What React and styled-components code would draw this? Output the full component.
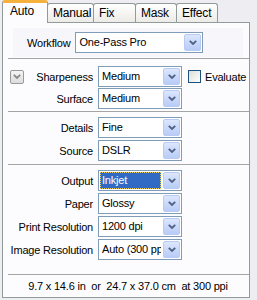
import React from 'react'
import styled, { createGlobalStyle } from 'styled-components'

const GlobalStyle = createGlobalStyle`
    body {
        margin: 0;
        background: #EEEDF2;
        font-family: "Liberation Sans", Arial, sans-serif;
        font-size: 11px;
        letter-spacing: -0.2px;
        color: #000;
    }
`

const Root = styled.div`
    width: 257px;
    height: 300px;
    padding: 0 7px 0 2px;
    box-sizing: border-box;
`

const TabBar = styled.div`
    display: flex;
    height: 23px;
    position: relative;
    z-index: 1;
`

const Tab = styled.div`
    box-sizing: border-box;
    width: ${p => p.$w}px;
    height: ${p => (p.$active ? 23 : 19)}px;
    margin-top: ${p => (p.$active ? 0 : 3)}px;
    margin-left: ${p => (p.$first ? 0 : -1)}px;
    border: 1px solid #919B9C;
    border-bottom: none;
    border-top: ${p => (p.$active ? '3px solid #F5B13C' : '1px solid #919B9C')};
    border-radius: 3px 3px 0 0;
    background: ${p => (p.$active ? '#FCFCFE' : 'linear-gradient(#FFFFFF, #ECEBE6)')};
    padding: ${p => (p.$active ? '2px 0 0 7px' : '3px 0 0 5px')};
    font-size: 12px;
    line-height: 13px;
`

const Panel = styled.div`
    box-sizing: border-box;
    margin-top: -1px;
    height: 276px;
    border: 1px solid #919B9C;
    background: #FCFCFE;
    display: flex;
    flex-direction: column;
`

const WorkflowGroup = styled.div`
    margin: 5px 6px 0 10px;
    height: 29px;
    background: #F7F7FB;
    display: flex;
    align-items: center;
    gap: 5px;
    padding-left: 14px;
`

const Separator = styled.div`
    height: 1px;
    margin-left: 5px;
    margin-top: ${p => p.$top || 0}px;
    background: #A5A5A5;
`

const Section = styled.div`
    display: grid;
    grid-template-columns: 85px 84px auto;
    column-gap: 5px;
    row-gap: ${p => p.$gap ?? 2}px;
    padding: ${p => p.$pad || '5px 0 3px 5px'};
`

const LabelCell = styled.div`
    display: flex;
    align-items: center;
    justify-content: ${p => (p.$withToggle ? 'space-between' : 'flex-end')};
    white-space: nowrap;
`

const SelectBox = styled.div`
    box-sizing: border-box;
    position: relative;
    width: ${p => p.$w || 84}px;
    height: 21px;
    border: 1px solid #7F9DB9;
    background: #FFFFFF;
    display: flex;
    align-items: center;
`

const SelectText = styled.div`
    flex: 1;
    min-width: 0;
    height: 17px;
    margin: 1px;
    padding-left: 2px;
    line-height: 17px;
    white-space: nowrap;
    overflow: hidden;
    box-sizing: border-box;
    background: ${p => (p.$selected ? '#316AC5' : 'transparent')};
    color: ${p => (p.$selected ? '#FFFFFF' : '#000')};
    outline: ${p => (p.$selected ? '1px dotted #F0D060' : 'none')};
    outline-offset: -1px;
`

const DropButton = styled.div`
    box-sizing: border-box;
    width: 17px;
    height: 17px;
    margin: 1px;
    border: 1px solid #B9CBF3;
    border-radius: 2px;
    background: linear-gradient(#DCE6FD, #B8CCF7);
    display: flex;
    align-items: center;
    justify-content: center;
`

const ToggleButton = styled.div`
    box-sizing: border-box;
    width: 14px;
    height: 14px;
    margin-left: 2px;
    border: 1px solid #9A9A9A;
    border-radius: 2px;
    background: linear-gradient(#F4F4F4, #DCDCDC);
    display: flex;
    align-items: center;
    justify-content: center;
`

const CheckRow = styled.label`
    display: flex;
    align-items: center;
    gap: 4px;
    margin-left: 1px;
    white-space: nowrap;
`

const CheckBox = styled.span`
    box-sizing: border-box;
    flex: none;
    width: 13px;
    height: 13px;
    border: 1px solid #1C5180;
    background: linear-gradient(135deg, #DCDCD7, #FFFFFF);
`

const Footer = styled.div`
    flex: 1;
    display: flex;
    align-items: center;
    justify-content: center;
    padding-left: 4px;
    white-space: pre;
`

const Chevron = ({ color = '#4D6185' }) => (
    <svg width="8" height="5" viewBox="0 0 8 5">
        <polyline points="0.8,0.8 4,4 7.2,0.8" fill="none" stroke={color} strokeWidth="1.8" />
    </svg>
)

const Select = ({ value, w, selected }) => (
    <SelectBox $w={w}>
        <SelectText $selected={selected}>{value}</SelectText>
        <DropButton>
            <Chevron />
        </DropButton>
    </SelectBox>
)

const tabs = [
    { name: 'Auto', w: 46 },
    { name: 'Manual', w: 47 },
    { name: 'Fix', w: 43 },
    { name: 'Mask', w: 42 },
    { name: 'Effect', w: 42 },
]

const App = () => (
    <Root>
        <GlobalStyle />
        <TabBar>
            {tabs.map((t, i) => (
                <Tab key={t.name} $w={t.w} $active={i === 0} $first={i === 0}>{t.name}</Tab>
            ))}
        </TabBar>
        <Panel>
            <WorkflowGroup>
                <span>Workflow</span>
                <Select value="One-Pass Pro" w={128} />
            </WorkflowGroup>
            <Separator $top={1} />
            <Section $pad="7px 0 2px 5px" $gap={1}>
                <LabelCell $withToggle>
                    <ToggleButton><Chevron color="#8A8A8A" /></ToggleButton>
                    <span>Sharpeness</span>
                </LabelCell>
                <Select value="Medium" />
                <CheckRow>
                    <CheckBox />
                    <span>Evaluate</span>
                </CheckRow>
                <LabelCell>Surface</LabelCell>
                <Select value="Medium" />
                <div />
            </Section>
            <Separator />
            <Section $pad="5px 0 3px 5px">
                <LabelCell>Details</LabelCell>
                <Select value="Fine" />
                <div />
                <LabelCell>Source</LabelCell>
                <Select value="DSLR" />
                <div />
            </Section>
            <Separator />
            <Section $pad="5px 0 0 5px">
                <LabelCell>Output</LabelCell>
                <Select value="Inkjet" selected />
                <div />
                <LabelCell>Paper</LabelCell>
                <Select value="Glossy" />
                <div />
                <LabelCell>Print Resolution</LabelCell>
                <Select value="1200 dpi" />
                <div />
                <LabelCell>Image Resolution</LabelCell>
                <Select value="Auto (300 pp" />
                <div />
            </Section>
            <Separator $top={14} />
            <Footer>{'9.7 x 14.6 in  or  24.7 x 37.0 cm  at 300 ppi'}</Footer>
        </Panel>
    </Root>
)

export default App
